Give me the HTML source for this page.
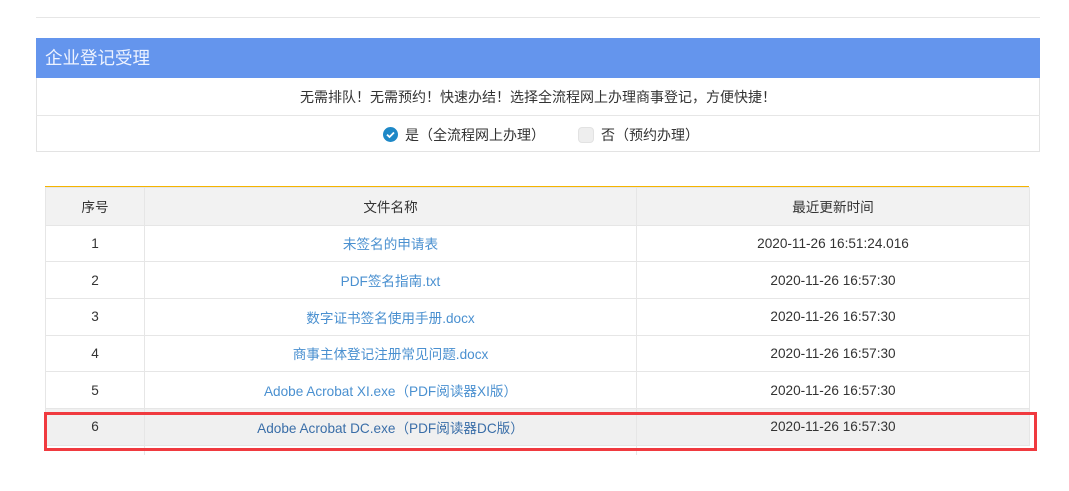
<!DOCTYPE html><html><head><meta charset="utf-8"><style>
body{margin:0;width:1069px;height:491px;background:#fff;position:relative;overflow:hidden;font-family:"Liberation Sans","Noto Sans CJK SC",sans-serif;}
.a{position:absolute}
.hl{position:absolute;left:36px;width:1004px;height:1px;background:#e6e6e6}
table{position:absolute;left:45px;top:187px;width:984px;border-collapse:collapse;font-size:13.6px;color:#333;table-layout:fixed}
td{border:1px solid #e6e6e6;height:35.7px;text-align:center;padding:0}
tr.h td{background:#f2f2f2;height:36.5px}
td.l{color:#4a90d0}
tr.s td{background:#f0f0f0}
tr.s td.l{color:#3a6ea8}
</style></head><body>
<div class="hl" style="top:17px"></div>
<div class="a" style="left:36px;top:38px;width:1002px;height:113px;border:1px solid #e3e3e3;border-top:none"></div>
<div class="a" style="left:36px;top:38px;width:1004px;height:40px;background:#6495ed;color:#eef3ff;font-size:17.5px;line-height:40px;text-indent:9px">企业登记受理</div>
<div class="a" style="left:36px;top:78px;width:1004px;height:37px;line-height:38px;text-align:center;font-size:14px;color:#333">无需排队！无需预约！快速办结！选择全流程网上办理商事登记，方便快捷！</div>
<div class="hl" style="top:115px"></div>
<div class="a" style="left:383px;top:127px;width:15px;height:15px;border-radius:50%;background:#1e88c7"><svg width="15" height="15"><path d="M4 7.6 L6.5 10 L11 5.5" stroke="#fff" stroke-width="1.8" fill="none"/></svg></div>
<div class="a" style="left:405px;top:125px;font-size:14px;color:#333">是（全流程网上办理）</div>
<div class="a" style="left:578px;top:127px;width:14px;height:14px;border-radius:4px;background:#eee;border:1px solid #e2e2e2"></div>
<div class="a" style="left:601px;top:125px;font-size:14px;color:#333">否（预约办理）</div>
<div class="a" style="left:45px;top:186px;width:984px;height:2px;background:#f5b400"></div>
<table>
<colgroup><col style="width:99px"><col style="width:492px"><col style="width:393px"></colgroup>
<tr class="h"><td>序号</td><td>文件名称</td><td>最近更新时间</td></tr>
<tr><td>1</td><td class="l">未签名的申请表</td><td>2020-11-26 16:51:24.016</td></tr>
<tr><td>2</td><td class="l">PDF签名指南.txt</td><td>2020-11-26 16:57:30</td></tr>
<tr><td>3</td><td class="l">数字证书签名使用手册.docx</td><td>2020-11-26 16:57:30</td></tr>
<tr><td>4</td><td class="l">商事主体登记注册常见问题.docx</td><td>2020-11-26 16:57:30</td></tr>
<tr><td>5</td><td class="l">Adobe Acrobat XI.exe（PDF阅读器XI版）</td><td>2020-11-26 16:57:30</td></tr>
<tr class="s"><td>6</td><td class="l">Adobe Acrobat DC.exe（PDF阅读器DC版）</td><td>2020-11-26 16:57:30</td></tr>
</table>
<div class="a" style="left:144px;top:446px;width:1px;height:9px;background:#e6e6e6"></div>
<div class="a" style="left:636px;top:446px;width:1px;height:9px;background:#e6e6e6"></div>
<div class="a" style="left:44px;top:412px;width:987px;height:33px;border:3px solid #f03a3f"></div>
</body></html>
